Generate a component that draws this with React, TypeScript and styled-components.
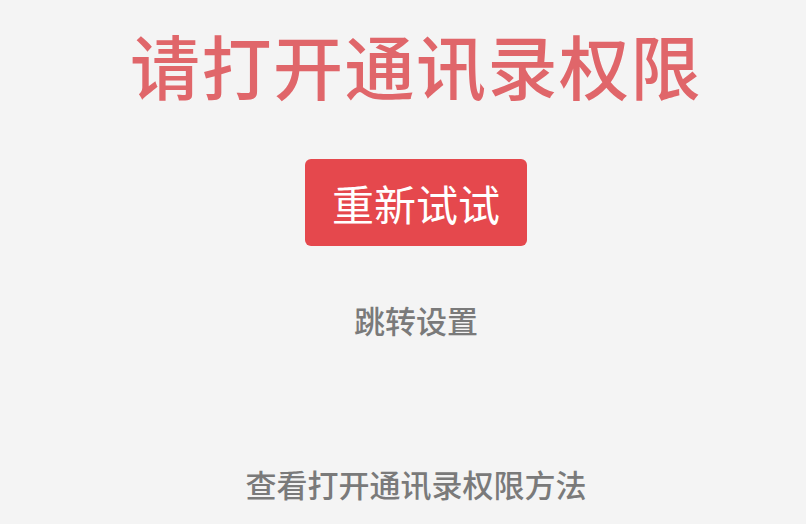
import React from 'react'
import styled, { createGlobalStyle } from 'styled-components'

const GlobalStyle = createGlobalStyle`
  html, body {
    margin: 0;
    padding: 0;
    background: #f4f4f4;
  }
  body {
    font-family: "Noto Sans CJK SC", "Noto Sans", sans-serif;
  }
`

const Page = styled.div`
  width: 806px;
  height: 524px;
  box-sizing: border-box;
  padding: 23px 0 0 26px;
  display: flex;
  flex-direction: column;
  align-items: center;
  background: #f4f4f4;
  overflow: hidden;
`

const Title = styled.h1`
  margin: 0;
  font-size: 70px;
  line-height: 84px;
  font-weight: 500;
  letter-spacing: 1.5px;
  color: #e0666a;
`

const RetryButton = styled.button`
  margin-top: 52px;
  width: 222px;
  height: 87px;
  border: none;
  border-radius: 6px;
  background: #e5484d;
  color: #fff;
  font-family: inherit;
  font-size: 42px;
  font-weight: 400;
  cursor: pointer;
`

const LinkText = styled.div<{ $gap: number }>`
  margin-top: ${(p) => p.$gap}px;
  font-size: 31px;
  line-height: 36px;
  font-weight: 500;
  color: #7a7a7a;
`

export default function App() {
  return (
    <>
      <GlobalStyle />
      <Page>
        <Title>请打开通讯录权限</Title>
        <RetryButton>重新试试</RetryButton>
        <LinkText $gap={56}>跳转设置</LinkText>
        <LinkText $gap={128}>查看打开通讯录权限方法</LinkText>
      </Page>
    </>
  )
}
